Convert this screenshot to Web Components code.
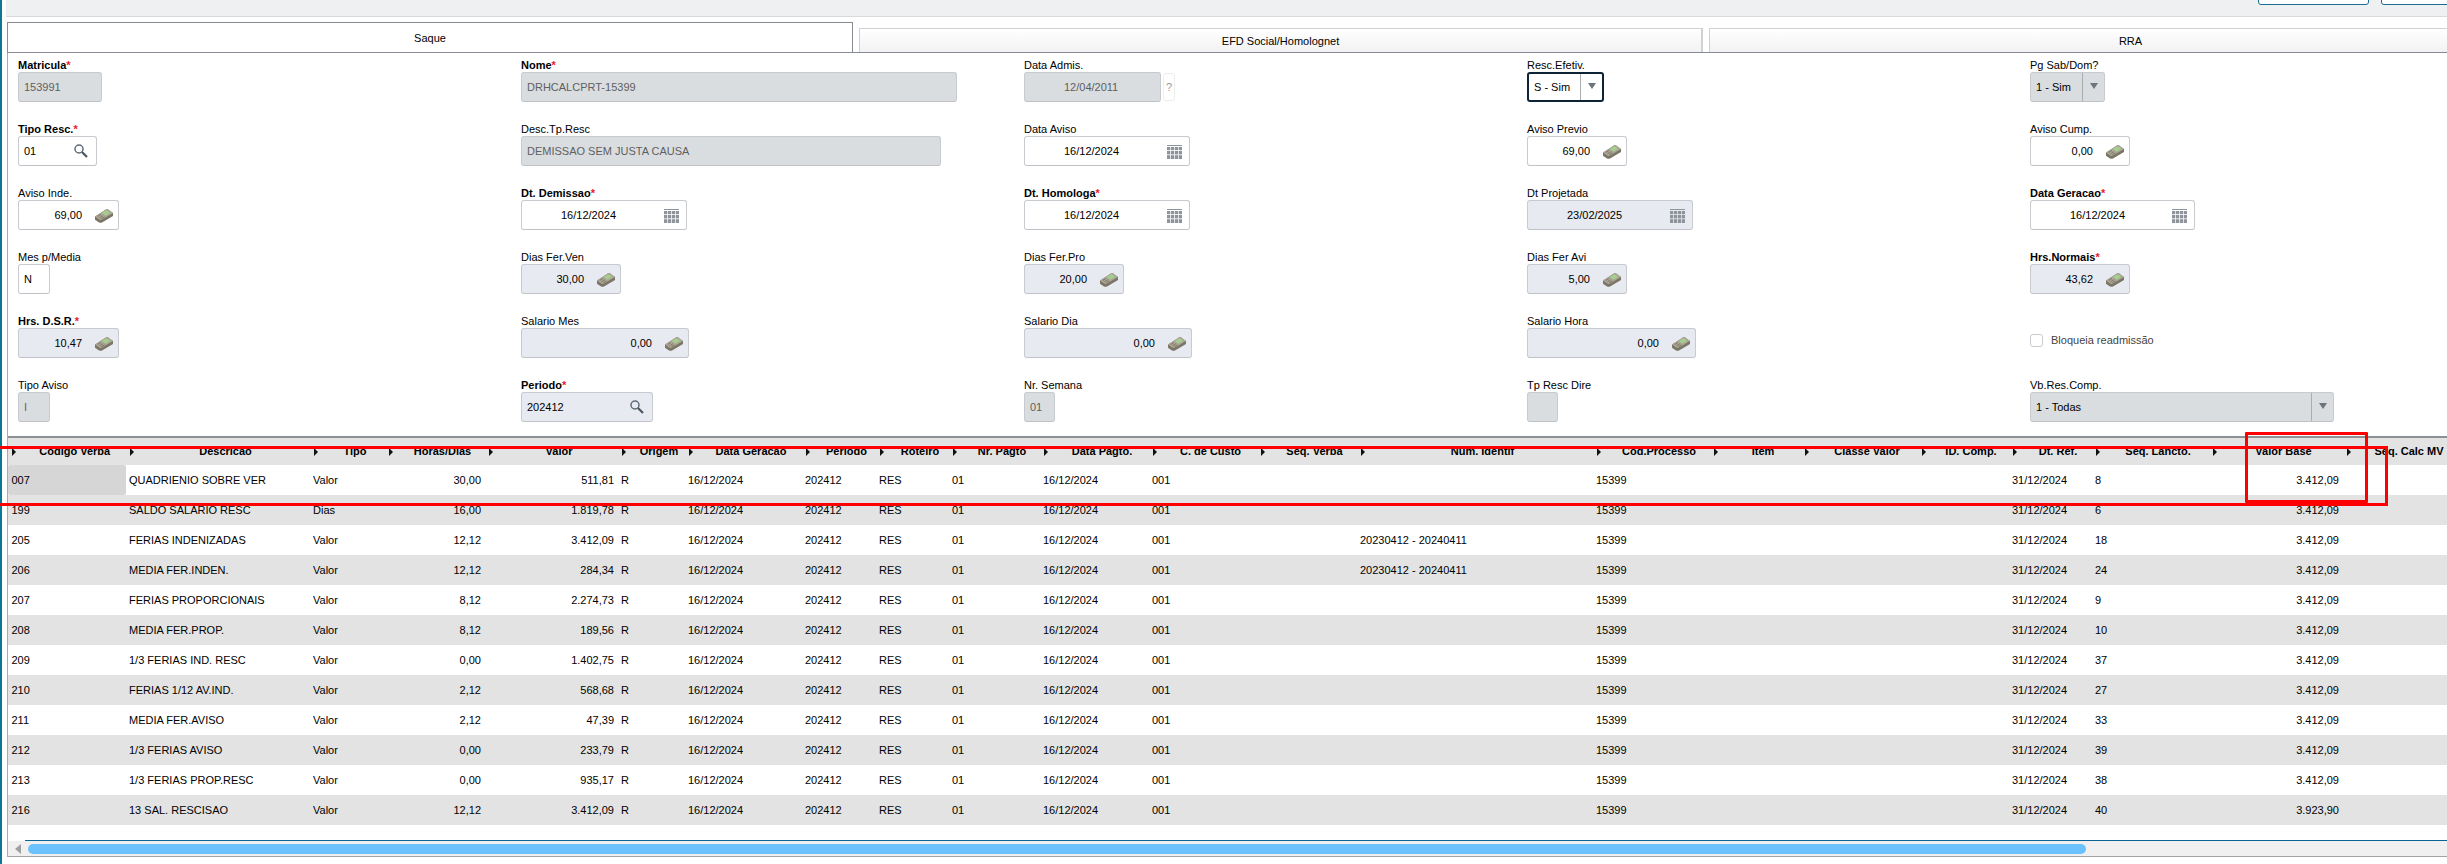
<!DOCTYPE html>
<html lang="pt">
<head>
<meta charset="utf-8">
<title>Rescisao</title>
<style>
    html, body { margin: 0; height: 100%; overflow: hidden; background: #fff; }
    body { font: 11px "Liberation Sans", Arial, sans-serif; color: #000; }
</style>
</head>
<body>
<rm-app>
    <rm-tabs slot="tabs">
        <rm-tab active>Saque</rm-tab>
        <rm-tab>EFD Social/Homolognet</rm-tab>
        <rm-tab>RRA</rm-tab>
    </rm-tabs>
    <rm-form slot="form">
        <rm-field label="Matricula" req kind="off" w="84">153991</rm-field>
        <rm-field label="Nome" req kind="off" w="436">DRHCALCPRT-15399</rm-field>
        <rm-field label="Data Admis." kind="off" mode="date" w="137" help>12/04/2011</rm-field>
        <rm-field label="Resc.Efetiv." kind="focus" mode="select" w="77" sep="22">S - Sim</rm-field>
        <rm-field label="Pg Sab/Dom?" kind="off" mode="select" w="75" sep="22">1 - Sim</rm-field>

        <rm-field label="Tipo Resc." req mode="search" w="79">01</rm-field>
        <rm-field label="Desc.Tp.Resc" kind="off" w="420">DEMISSAO SEM JUSTA CAUSA</rm-field>
        <rm-field label="Data Aviso" mode="date" w="166">16/12/2024</rm-field>
        <rm-field label="Aviso Previo" mode="num" w="100">69,00</rm-field>
        <rm-field label="Aviso Cump." mode="num" w="100">0,00</rm-field>

        <rm-field label="Aviso Inde." mode="num" w="101">69,00</rm-field>
        <rm-field label="Dt. Demissao" req mode="date" w="166">16/12/2024</rm-field>
        <rm-field label="Dt. Homologa" req mode="date" w="166">16/12/2024</rm-field>
        <rm-field label="Dt Projetada" kind="ro" mode="date" w="166">23/02/2025</rm-field>
        <rm-field label="Data Geracao" req mode="date" w="165">16/12/2024</rm-field>

        <rm-field label="Mes p/Media" w="32">N</rm-field>
        <rm-field label="Dias Fer.Ven" kind="ro" mode="num" w="100">30,00</rm-field>
        <rm-field label="Dias Fer.Pro" kind="ro" mode="num" w="100">20,00</rm-field>
        <rm-field label="Dias Fer Avi" kind="ro" mode="num" w="100">5,00</rm-field>
        <rm-field label="Hrs.Normais" req kind="ro" mode="num" w="100">43,62</rm-field>

        <rm-field label="Hrs. D.S.R." req kind="ro" mode="num" w="101">10,47</rm-field>
        <rm-field label="Salario Mes" kind="ro" mode="num" w="168">0,00</rm-field>
        <rm-field label="Salario Dia" kind="ro" mode="num" w="168">0,00</rm-field>
        <rm-field label="Salario Hora" kind="ro" mode="num" w="169">0,00</rm-field>
        <rm-check>Bloqueia readmissão</rm-check>

        <rm-field label="Tipo Aviso" kind="off" w="32">I</rm-field>
        <rm-field label="Periodo" req kind="ro" mode="search" w="132">202412</rm-field>
        <rm-field label="Nr. Semana" kind="off" w="31">01</rm-field>
        <rm-field label="Tp Resc Dire" kind="off" w="31"></rm-field>
        <rm-field label="Vb.Res.Comp." kind="off" mode="select" w="304" sep="22">1 - Todas</rm-field>
    </rm-form>
    <rm-grid slot="grid"></rm-grid>
</rm-app>
<rm-marks></rm-marks>

<script>
const icons = {
    calc: `<svg width="18" height="14" viewBox="0 0 18 14">
        <path d="M0 7.5 L11 .4 Q12 -.2 13 .4 L18 4 L18 7 L7 13.6 Q5.5 14.2 4 13.4 L0 10.8 Z" fill="#7a7565"/>
        <path d="M0 7.5 L11 .4 Q12 -.2 13 .4 L18 4 L6.6 10.8 Q5.4 11.4 4.2 10.6 Z" fill="#aca797"/>
        <path d="M7 4 L11.4 1.2 L15 3.7 L10.6 6.5 Z" fill="#a3d08c"/>
        <path d="M2.6 7.6 L6 5.4 M4.4 9 L8 6.6 M6.2 10 L9.6 7.8" stroke="#7d7868" stroke-width="1"/>
    </svg>`,
    cal: `<svg width="15" height="14" viewBox="0 0 15 14" fill="#8f949c">
        <rect width="15" height="1"/>
        <rect y="2" width="3.2" height="3.2"/><rect x="3.9" y="2" width="3.2" height="3.2"/><rect x="7.8" y="2" width="3.2" height="3.2"/><rect x="11.7" y="2" width="3.3" height="3.2"/>
        <rect y="6" width="3.2" height="3.4"/><rect x="3.9" y="6" width="3.2" height="3.4"/><rect x="7.8" y="6" width="3.2" height="3.4"/><rect x="11.7" y="6" width="3.3" height="3.4"/>
        <rect y="10.2" width="3.2" height="3.8"/><rect x="3.9" y="10.2" width="3.2" height="3.8"/><rect x="7.8" y="10.2" width="3.2" height="3.8"/><rect x="11.7" y="10.2" width="3.3" height="3.8"/>
    </svg>`,
    search: `<svg width="14" height="14" viewBox="0 0 14 14" fill="none">
        <circle cx="5" cy="5" r="4" stroke="#5f6b78" stroke-width="1.5"/>
        <path d="M8 8 L13 13" stroke="#4c5560" stroke-width="2.2"/>
    </svg>`,
    arrow: `<svg width="8" height="6" viewBox="0 0 8 6"><path d="M0 0 H8 L4 6 Z" fill="#6c737d"/></svg>`
};

class RmApp extends HTMLElement {
    constructor() {
        super();
        this.attachShadow({ mode: 'open' });
        this.shadowRoot.innerHTML = `
            <style>
                :host { display: flex; width: 2447px; height: 864px; overflow: hidden; }
                .strip { flex: none; width: 2px; margin-right: 5px; background: #0b7894; }
                .main { flex: 1; min-width: 0; display: flex; flex-direction: column; }
                .bar {
                    flex: none; height: 16px; margin-left: -1px; background: #eff0f2;
                    border-bottom: 1px solid #d9dadc; display: flex; justify-content: flex-end;
                    gap: 12px; overflow: hidden;
                }
                .bar i {
                    display: block; height: 8px; margin-top: -5px; background: #fff;
                    border: 1px solid #1b6a96; border-radius: 3px;
                }
                .bar i:first-child { width: 109px; }
                .bar i:last-child { width: 70px; margin-right: -6px; }
                .panel {
                    flex: none; height: 835px; margin-top: 5px; box-sizing: border-box;
                    border-left: 1px solid #a8abae; display: flex; flex-direction: column;
                }
            </style>
            <div class="strip"></div>
            <div class="main">
                <div class="bar"><i></i><i></i></div>
                <div class="panel">
                    <slot name="tabs"></slot>
                    <slot name="form"></slot>
                    <slot name="grid"></slot>
                </div>
            </div>
        `;
    }
}

class RmTabs extends HTMLElement {
    constructor() {
        super();
        this.attachShadow({ mode: 'open' });
        this.shadowRoot.innerHTML = `
            <style>
                :host {
                    display: flex; align-items: flex-end; gap: 6px; height: 30px; flex: none;
                    border-bottom: 1px solid #868c92; margin-left: -1px;
                }
            </style>
            <slot></slot>
        `;
    }
}

class RmTab extends HTMLElement {
    constructor() {
        super();
        this.attachShadow({ mode: 'open' });
        this.shadowRoot.innerHTML = `
            <style>
                :host {
                    display: flex; flex: none; width: 844px; height: 24px; box-sizing: border-box;
                    align-items: center; justify-content: center;
                    border: 1px solid #cfd1d3; border-bottom: 0; border-width: 1px 2px 0 1px;
                    background: linear-gradient(#fff, #f2f2f2); font-size: 11px; color: #000;
                }
                :host([active]) {
                    height: 30px; width: 846px; background: #fff; padding-top: 1px;
                    border-color: #868c92; border-width: 1px 1px 0 1px;
                }
            </style>
            <slot></slot>
        `;
    }
}

class RmForm extends HTMLElement {
    constructor() {
        super();
        this.attachShadow({ mode: 'open' });
        this.shadowRoot.innerHTML = `
            <style>
                :host {
                    display: grid; flex: none; box-sizing: border-box; height: 385px;
                    grid-template-columns: repeat(5, 503px); grid-template-rows: repeat(6, 64px);
                    padding: 3px 0 0 10px; overflow: hidden; border-bottom: 2px solid #8c9196;
                }
            </style>
            <slot></slot>
        `;
    }
}

class RmField extends HTMLElement {
    constructor() {
        super();
        this.attachShadow({ mode: 'open' });
        const mode = this.getAttribute('mode') || 'text';
        const kind = this.getAttribute('kind') || 'plain';
        const req = this.hasAttribute('req');
        const sep = this.getAttribute('sep') || 24;
        const icon = { num: icons.calc, date: icons.cal, search: icons.search }[mode] || '';
        const tail = mode === 'select'
            ? `<span class="drop" style="width:${sep}px">${icons.arrow}</span>`
            : (kind === 'off' && mode === 'date' ? '' : `<span class="ico">${icon}</span>`);
        this.shadowRoot.innerHTML = `
            <style>
                :host { display: block; font-size: 11px; color: #000; }
                .lbl { height: 16px; line-height: 18px; white-space: nowrap; }
                .lbl.req { font-weight: bold; }
                .lbl b { color: #f0142f; font-weight: bold; }
                .line { display: flex; gap: 2px; }
                .box {
                    display: flex; align-items: center; height: 30px; box-sizing: border-box;
                    border: 1px solid #c7cbcf; border-bottom-color: #bfc3c7; border-radius: 3px; background: #fff;
                }
                .box.off { background: #dadddf; color: #5f5f5f; }
                .box.off.select { color: #000; }
                .box.ro { background: #e7eaf1; }
                .box.focus { border: 2px solid #0c2435; }
                .val { flex: 1; min-width: 0; white-space: nowrap; padding-left: 5px; }
                .num .val { text-align: right; padding: 0 13px 0 0; }
                .date .val { padding-left: 39px; }
                .select .val { padding-left: 5px; }
                .ico { flex: none; display: flex; margin-top: 2px; }
                .num .ico { margin-right: 5px; }
                .date .ico { margin-right: 7px; }
                .search .ico { margin: -1px 8px 0 0; }
                .drop {
                    flex: none; align-self: stretch; box-sizing: border-box; display: flex;
                    align-items: center; justify-content: center; padding-bottom: 3px;
                    border-left: 1px solid #a9adb1;
                }
                .help {
                    width: 12px; height: 28px; margin-top: 1px; box-sizing: border-box; text-align: center;
                    line-height: 27px; color: #999; border: 1px solid #eceded; border-radius: 3px;
                }
            </style>
            <div class="lbl ${req ? 'req' : ''}">${this.getAttribute('label')}${req ? '<b>*</b>' : ''}</div>
            <div class="line">
                <div class="box ${kind} ${mode}" style="width:${this.getAttribute('w')}px">
                    <span class="val"><slot></slot></span>${tail}
                </div>
                ${this.hasAttribute('help') ? '<div class="help">?</div>' : ''}
            </div>
        `;
    }
}

class RmCheck extends HTMLElement {
    constructor() {
        super();
        this.attachShadow({ mode: 'open' });
        this.shadowRoot.innerHTML = `
            <style>
                :host {
                    display: flex; align-items: flex-start; gap: 8px; padding-top: 22px;
                    font-size: 11px; color: #444;
                }
                i {
                    flex: none; width: 13px; height: 13px; box-sizing: border-box;
                    border: 1px solid #c7cbcf; border-radius: 3px; background: #fff;
                }
            </style>
            <i></i><span><slot></slot></span>
        `;
    }
}

const columns = [
    ['Codigo Verba', 117.5], ['Descricao', 184], ['Tipo', 75], ['Horas/Dias', 100], ['Valor', 133],
    ['Origem', 67], ['Data Geracao', 117], ['Periodo', 74], ['Roteiro', 73], ['Nr. Pagto', 91],
    ['Data Pagto.', 109], ['C. de Custo', 108], ['Seq. Verba', 100], ['Num. Identif', 236],
    ['Cod.Processo', 117], ['Item', 91], ['Classe Valor', 117], ['ID. Comp.', 91], ['Dt. Ref.', 83],
    ['Seq. Lancto.', 117], ['Valor Base', 134], ['Seq. Calc MV', 117]
];

const verbas = [
    ['007', 'QUADRIENIO SOBRE VER', 'Valor', '30,00', '511,81', '', '8', '3.412,09'],
    ['199', 'SALDO SALARIO RESC', 'Dias', '16,00', '1.819,78', '', '6', '3.412,09'],
    ['205', 'FERIAS INDENIZADAS', 'Valor', '12,12', '3.412,09', '20230412 - 20240411', '18', '3.412,09'],
    ['206', 'MEDIA FER.INDEN.', 'Valor', '12,12', '284,34', '20230412 - 20240411', '24', '3.412,09'],
    ['207', 'FERIAS PROPORCIONAIS', 'Valor', '8,12', '2.274,73', '', '9', '3.412,09'],
    ['208', 'MEDIA FER.PROP.', 'Valor', '8,12', '189,56', '', '10', '3.412,09'],
    ['209', '1/3 FERIAS IND. RESC', 'Valor', '0,00', '1.402,75', '', '37', '3.412,09'],
    ['210', 'FERIAS 1/12 AV.IND.', 'Valor', '2,12', '568,68', '', '27', '3.412,09'],
    ['211', 'MEDIA FER.AVISO', 'Valor', '2,12', '47,39', '', '33', '3.412,09'],
    ['212', '1/3 FERIAS AVISO', 'Valor', '0,00', '233,79', '', '39', '3.412,09'],
    ['213', '1/3 FERIAS PROP.RESC', 'Valor', '0,00', '935,17', '', '38', '3.412,09'],
    ['216', '13 SAL. RESCISAO', 'Valor', '12,12', '3.412,09', '', '40', '3.923,90']
];

class RmGrid extends HTMLElement {
    constructor() {
        super();
        this.attachShadow({ mode: 'open' });
        const tracks = columns.map(c => c[1] + 'px').join(' ');
        const head = columns.map(c => `<div class="th"><svg width="4" height="8" viewBox="0 0 4 8"><path d="M0 0 L4 4 L0 8 Z" fill="#111"/></svg><span>${c[0]}</span></div>`).join('');
        const right = new Set([3, 4, 20]);
        const rows = verbas.map((v, n) => {
            const cells = [v[0], v[1], v[2], v[3], v[4], 'R', '16/12/2024', '202412', 'RES', '01', '16/12/2024', '001', '', v[5], '15399', '', '', '', '31/12/2024', v[6], v[7], ''];
            const tds = cells.map((t, i) => `<div class="td${right.has(i) ? ' r' : ''}${n === 0 && i === 0 ? ' sel' : ''}">${t}</div>`).join('');
            return `<div class="row">${tds}</div>`;
        }).join('');
        this.shadowRoot.innerHTML = `
            <style>
                :host { display: flex; flex-direction: column; flex: none; height: 419px; overflow: hidden; font-size: 11px; color: #000; }
                .row, .head { display: grid; grid-template-columns: ${tracks}; flex: none; }
                .head { height: 27px; background: #e3e3e3; font-weight: bold; }
                .th { position: relative; display: flex; align-items: center; padding: 0 0 1px 16px; white-space: nowrap; overflow: hidden; }
                .th svg { position: absolute; left: 4px; top: 10px; }
                .th span { flex: 1; text-align: center; }
                .row { height: 30px; background: #fff; }
                .row:nth-child(even) { background: #e3e3e3; }
                .td { line-height: 30px; padding: 0 3.5px; white-space: nowrap; overflow: hidden; }
                .td.r { text-align: right; }
                .td.sel { background: #d6d6d6; border-radius: 2px; }
                .body { flex: none; }
                .gap { flex: none; height: 15px; }
                .scroll {
                    flex: none; height: 16px; box-sizing: border-box; display: flex; align-items: center;
                    background: #f0f0f0; border-bottom: 1px solid #a3a3a3;
                }
                .scroll-top { flex: none; height: 1px; margin-left: 17px; background: #0b6496; }
                .arrow { flex: none; width: 20px; display: flex; justify-content: center; }
                .thumb { flex: none; width: 2058px; height: 10px; border-radius: 5px; background: #6cc2ff; }
            </style>
            <div class="head">${head}</div>
            <div class="body">${rows}</div>
            <div class="gap"></div>
            <div class="scroll-top"></div>
            <div class="scroll">
                <span class="arrow"><svg width="6" height="10" viewBox="0 0 6 10"><path d="M6 0 V10 L0 5 Z" fill="#a0a0a0"/></svg></span>
                <div class="thumb"></div>
            </div>
        `;
    }
}

class RmMarks extends HTMLElement {
    constructor() {
        super();
        this.attachShadow({ mode: 'open' });
        this.shadowRoot.innerHTML = `
            <style>
                :host { position: absolute; inset: 0; pointer-events: none; overflow: hidden; }
                div { position: absolute; box-sizing: border-box; border: 3px solid #f00; }
                .big { left: -4px; top: 446px; width: 2392px; height: 60px; }
                .small { left: 2245px; top: 432px; width: 123px; height: 71px; border-radius: 1px; }
            </style>
            <div class="big"></div>
            <div class="small"></div>
        `;
    }
}

customElements.define('rm-app', RmApp);
customElements.define('rm-tabs', RmTabs);
customElements.define('rm-tab', RmTab);
customElements.define('rm-form', RmForm);
customElements.define('rm-field', RmField);
customElements.define('rm-check', RmCheck);
customElements.define('rm-grid', RmGrid);
customElements.define('rm-marks', RmMarks);
</script>
</body>
</html>
